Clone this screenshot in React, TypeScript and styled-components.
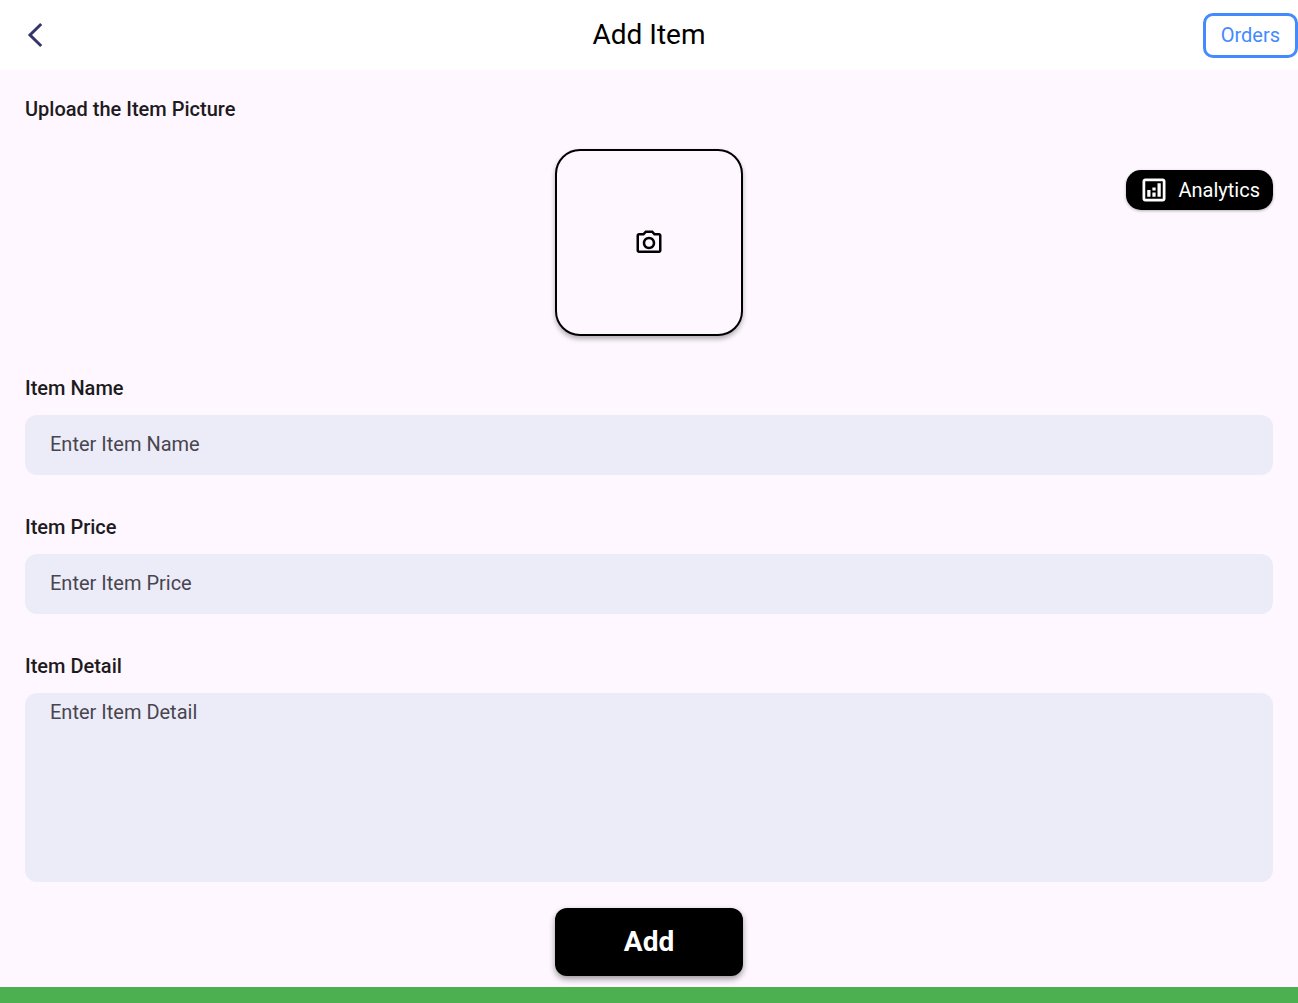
import React from "react";
import styled, { createGlobalStyle } from "styled-components";

const GlobalStyle = createGlobalStyle`
  * {
    box-sizing: border-box;
  }
  body {
    margin: 0;
    background: #fef7ff;
    color: #1d1b20;
    font-family: Roboto, "Liberation Sans", sans-serif;
    font-size: 20px;
    line-height: 24px;
  }
  button, input, textarea {
    font: inherit;
  }
`;

const Page = styled.div`
  display: flex;
  flex-direction: column;
  min-height: 100vh;
`;

const AppBar = styled.header`
  display: grid;
  grid-template-columns: 1fr auto 1fr;
  align-items: center;
  height: 70px;
  background: #ffffff;
`;

const BackButton = styled.button`
  display: flex;
  justify-self: start;
  margin-left: 20px;
  padding: 0;
  border: 0;
  background: none;
  color: #35356b;
  cursor: pointer;
`;

const Title = styled.h1`
  margin: 0;
  color: #000000;
  font-size: 28px;
  font-weight: 400;
  line-height: 36px;
`;

const OrdersButton = styled.button`
  justify-self: end;
  height: 45px;
  padding: 0 15px;
  border: 3px solid #448aff;
  border-radius: 10px;
  background: #ffffff;
  color: #448aff;
  cursor: pointer;
`;

const Form = styled.form`
  display: flex;
  flex-direction: column;
  padding: 27px 25px 11px;
`;

const SectionTitle = styled.h2`
  margin: 0 0 28px;
  font-size: 20px;
  font-weight: 500;
  line-height: 24px;
`;

const UploadRow = styled.div`
  display: grid;
  grid-template-columns: 1fr auto 1fr;
  align-items: start;
  margin-bottom: 40px;
`;

const UploadButton = styled.button`
  display: flex;
  grid-column: 2;
  align-items: center;
  justify-content: center;
  width: 188px;
  height: 187px;
  border: 2px solid #000000;
  border-radius: 25px;
  background: #fef7ff;
  box-shadow: 0 3px 5px rgba(0, 0, 0, 0.3);
  color: #000000;
  cursor: pointer;
`;

const AnalyticsButton = styled.button`
  display: flex;
  align-items: center;
  justify-self: end;
  gap: 10px;
  height: 40px;
  margin-top: 21px;
  padding: 0 13px;
  border: 0;
  border-radius: 15px;
  background: #000000;
  box-shadow: 0 1px 3px rgba(0, 0, 0, 0.3);
  color: #ffffff;
  cursor: pointer;
`;

const Fields = styled.div`
  display: flex;
  flex-direction: column;
  gap: 40px;
`;

const Field = styled.div`
  display: flex;
  flex-direction: column;
  gap: 15px;
`;

const Label = styled.label`
  font-weight: 500;
`;

const TextInput = styled.input`
  width: 100%;
  height: 60px;
  padding: 0 25px 2px;
  border: 0;
  border-radius: 12px;
  background: #ececf8;
  color: #1d1b20;
  &::placeholder {
    color: #49454f;
    opacity: 1;
  }
`;

const TextArea = styled.textarea`
  display: block;
  width: 100%;
  height: 189px;
  padding: 7px 25px;
  border: 0;
  border-radius: 12px;
  background: #ececf8;
  color: #1d1b20;
  resize: none;
  &::placeholder {
    color: #49454f;
    opacity: 1;
  }
`;

const AddButton = styled.button`
  align-self: center;
  width: 188px;
  height: 68px;
  margin-top: 26px;
  border: 0;
  border-radius: 12px;
  background: #000000;
  box-shadow: 0 3px 6px rgba(0, 0, 0, 0.4);
  color: #ffffff;
  font-size: 28px;
  font-weight: 700;
  line-height: 36px;
  cursor: pointer;
`;

const BottomBar = styled.footer`
  flex: 1;
  min-height: 16px;
  background: #4caf50;
`;

const BackIcon = () => (
  <svg width="30" height="30" viewBox="0 0 30 30" fill="none" stroke="currentColor" strokeWidth="3" aria-hidden="true">
    <path d="M21.2 4 10 15l11.2 11" />
  </svg>
);

const CameraIcon = () => (
  <svg width="30" height="30" viewBox="0 0 24 24" fill="currentColor" aria-hidden="true">
    <path d="M14.12 4l1.83 2H20v12H4V6h4.05l1.83-2h4.24M15 2H9L7.17 4H4c-1.1 0-2 .9-2 2v12c0 1.1.9 2 2 2h16c1.1 0 2-.9 2-2V6c0-1.1-.9-2-2-2h-3.17L15 2zm-3 7c1.65 0 3 1.35 3 3s-1.35 3-3 3-3-1.35-3-3 1.35-3 3-3m0-2c-2.76 0-5 2.24-5 5s2.24 5 5 5 5-2.24 5-5-2.24-5-5-5z" />
  </svg>
);

const AnalyticsIcon = () => (
  <svg width="30" height="30" viewBox="0 0 24 24" fill="currentColor" aria-hidden="true">
    <path fillRule="evenodd" d="M19 2.8H5c-1.2 0-2.2 1-2.2 2.2v14c0 1.2 1 2.2 2.2 2.2h14c1.2 0 2.2-1 2.2-2.2V5c0-1.2-1-2.2-2.2-2.2zM19 19H5V5h14v14z" />
    <path d="M6.6 12h2.6v5.4H6.6zM14.8 6.5h2.6v10.9h-2.6zM10.7 14h2.6v3.4h-2.6zM10.7 10h2.6v2.4h-2.6z" />
  </svg>
);

export default function App() {
  return (
    <>
      <GlobalStyle />
      <Page>
        <AppBar>
          <BackButton type="button" aria-label="Back">
            <BackIcon />
          </BackButton>
          <Title>Add Item</Title>
          <OrdersButton type="button">Orders</OrdersButton>
        </AppBar>
        <Form onSubmit={(event) => event.preventDefault()}>
          <SectionTitle>Upload the Item Picture</SectionTitle>
          <UploadRow>
            <UploadButton type="button" aria-label="Choose a picture">
              <CameraIcon />
            </UploadButton>
            <AnalyticsButton type="button">
              <AnalyticsIcon />
              Analytics
            </AnalyticsButton>
          </UploadRow>
          <Fields>
            <Field>
              <Label htmlFor="item-name">Item Name</Label>
              <TextInput id="item-name" placeholder="Enter Item Name" />
            </Field>
            <Field>
              <Label htmlFor="item-price">Item Price</Label>
              <TextInput id="item-price" placeholder="Enter Item Price" />
            </Field>
            <Field>
              <Label htmlFor="item-detail">Item Detail</Label>
              <TextArea id="item-detail" placeholder="Enter Item Detail" />
            </Field>
          </Fields>
          <AddButton type="submit">Add</AddButton>
        </Form>
        <BottomBar />
      </Page>
    </>
  );
}
